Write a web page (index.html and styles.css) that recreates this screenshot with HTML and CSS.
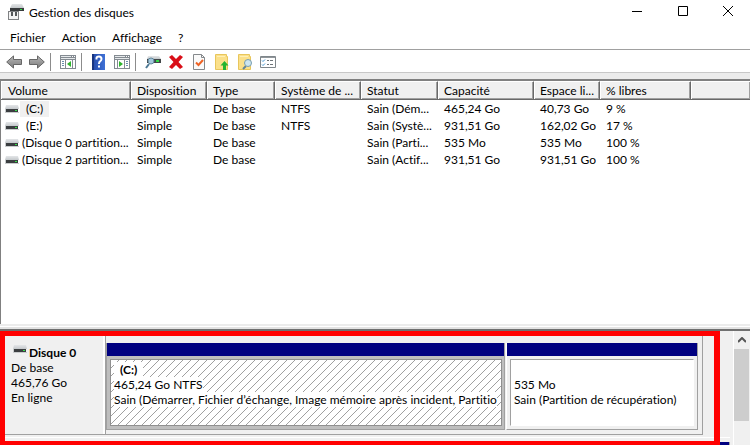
FILE: index.html
```html
<!DOCTYPE html>
<html lang="fr">
<head>
<meta charset="utf-8">
<title>Gestion des disques</title>
<link rel="stylesheet" href="styles.css">
</head>
<body>
<svg class="defs" aria-hidden="true">
  <defs>
    <linearGradient id="metal" x1="0" y1="0" x2="0" y2="1"><stop offset="0" stop-color="#e4e6e8"/><stop offset="1" stop-color="#c4c8cb"/></linearGradient>
    <linearGradient id="arrow" x1="0" y1="0" x2="0" y2="1"><stop offset="0" stop-color="#b8b8b8"/><stop offset="1" stop-color="#7c7c7c"/></linearGradient>
    <linearGradient id="help" x1="0" y1="0" x2="1" y2="0"><stop offset="0" stop-color="#2349a8"/><stop offset="1" stop-color="#3f71d6"/></linearGradient>
    <symbol id="drive" viewBox="0 0 14 8">
      <path d="M1 0h12l1 4H0z" fill="url(#metal)"/>
      <path d="M1 4h12v3H1z" fill="#3b3e40"/>
      <path d="M0 4h1v3h13V4h0v4H0z" fill="#c9cccd"/>
      <path d="M10 5h2v1h-2z" fill="#36e04a"/>
    </symbol>
    <symbol id="pane" viewBox="0 0 16 14">
      <path d="M0 0h16v14H0z" fill="#848b92"/>
      <path d="M1 1h10v1H1zM1 3h14v1H1z" fill="#e6e9eb"/>
      <path d="M12 1h1v1h-1zM14 1h1v1h-1z" fill="#fff"/>
    </symbol>
    <symbol id="folder" viewBox="0 0 14 16">
      <path d="M.5.500h11v2h1v13H.5z" fill="#fbe08a" stroke="#e8c65c"/>
      <path d="M2 2h8v1H2z" fill="#fff0b5"/>
    </symbol>
  </defs>
</svg>
<main class="window">
  <header class="titlebar">
    <svg class="app-icon" width="16" height="16" viewBox="0 0 16 16" aria-hidden="true">
      <path d="M4 0h10l2 4H2z" fill="url(#metal)"/><path d="M2 4h14v3H2z" fill="#383b3d"/><path d="M12 5h2v1h-2z" fill="#35dd48"/>
      <path d="M0 7h11v9H0z" fill="#808284"/><path d="M1 8h9v7H1z" fill="#f4f4f4"/><path d="M3 8h2v4H3zM7 8h2v4H7z" fill="#55585a"/>
    </svg>
    <h1>Gestion des disques</h1>
    <div class="caption-buttons">
      <button type="button" aria-label="Réduire"><svg width="12" height="12" viewBox="0 0 12 12"><path d="M1 5.500h10" stroke="#000"/></svg></button>
      <button type="button" aria-label="Agrandir"><svg width="12" height="12" viewBox="0 0 12 12"><path d="M1.500.500h9v9h-9z" stroke="#000" fill="none"/></svg></button>
      <button type="button" aria-label="Fermer"><svg width="12" height="12" viewBox="0 0 12 12"><path d="M1 0l10 10M11 0L1 10" stroke="#000"/></svg></button>
    </div>
  </header>
  <nav class="menubar">
    <button type="button">Fichier</button>
    <button type="button">Action</button>
    <button type="button">Affichage</button>
    <button type="button">?</button>
  </nav>
  <div class="toolbar" role="toolbar">
    <button type="button" aria-label="Précédent"><svg width="16" height="14" viewBox="0 0 16 14"><path d="M.7 7L7.500.9v3.600h8v5h-8v3.600z" fill="url(#arrow)" stroke="#676767"/></svg></button>
    <button type="button" aria-label="Suivant"><svg width="16" height="14" viewBox="0 0 16 14"><path d="M15.300 7L8.500.9v3.600h-8v5h8v3.600z" fill="url(#arrow)" stroke="#676767"/></svg></button>
    <span class="separator"></span>
    <button type="button" aria-label="Arborescence"><svg width="16" height="14" viewBox="0 0 16 14"><use href="#pane"/><path d="M1 5h4v8H1zM6 5h6v8H6zM13 5h2v8h-2z" fill="#fff"/><path d="M2 6h2v1H2zM2 8h2v1H2zM2 10h2v1H2z" fill="#6b8fae"/><path d="M11 6v6L7 9z" fill="#2eb52e"/></svg></button>
    <span class="separator"></span>
    <button type="button" aria-label="Aide"><svg width="13" height="16" viewBox="0 0 13 16"><path d="M0 0h13v16H0z" fill="url(#help)"/><path d="M0 0h2v16H0z" fill="#183580"/><path d="M4.500 5.500V4q0-1.500 2.500-1.500T9.500 5Q9.500 6.500 8 7.500 7 8 7 10M7 11.500v2" fill="none" stroke="#fff" stroke-width="2"/></svg></button>
    <button type="button" aria-label="Volet d'actions"><svg width="16" height="14" viewBox="0 0 16 14"><use href="#pane"/><path d="M1 5h2v8H1zM4 5h6v8H4zM11 5h4v8h-4z" fill="#fff"/><path d="M12 6h2v1h-2zM12 8h2v1h-2zM12 10h2v1h-2z" fill="#6b8fae"/><path d="M5 6v6l4-3z" fill="#2eb52e"/></svg></button>
    <span class="separator"></span>
    <button type="button" aria-label="Analyser les disques"><svg width="16" height="14" viewBox="0 0 16 14"><path d="M3 1h11l2 3H2z" fill="url(#metal)"/><path d="M2 4h14v4H2z" fill="#414648"/><path d="M11 5h3v2h-3z" fill="#32d944"/><path d="M4 9L1 13" stroke="#4c7894" stroke-width="2"/><circle cx="6" cy="6" r="3" fill="#a4c8dc" stroke="#62879c"/></svg></button>
    <button type="button" aria-label="Supprimer"><svg width="14" height="14" viewBox="0 0 14 14"><path d="M3 0l4 4 4-4 3 2-4.500 5 4.500 5-3 2-4-4-4 4-3-2 4.500-5L0 2z" fill="#d90e17"/></svg></button>
    <button type="button" aria-label="Propriétés"><svg width="12" height="16" viewBox="0 0 12 16"><path d="M.5.500h8l3 3v12H.5z" fill="#fafafa" stroke="#85898c"/><path d="M8.500.500v3h3" fill="none" stroke="#85898c"/><path d="M3 8.500l2.500 2.500L10 6" fill="none" stroke="#ee6325" stroke-width="2"/></svg></button>
    <button type="button" aria-label="Dossier parent"><svg width="14" height="16" viewBox="0 0 14 16"><use href="#folder"/><path d="M9.500 7l4 4.500H11V16H8v-4.500H5.500z" fill="#25b431"/></svg></button>
    <button type="button" aria-label="Rechercher"><svg width="16" height="16" viewBox="0 0 16 16"><use href="#folder" x="1" width="14" height="16"/><path d="M9 12l-3 3" stroke="#62859a" stroke-width="2"/><circle cx="11" cy="9" r="3.500" fill="#cde5f0" stroke="#799dae"/></svg></button>
    <button type="button" aria-label="Options"><svg width="16" height="12" viewBox="0 0 16 12"><path d="M.5.500h15v11H.5z" fill="#fff" stroke="#7f868b"/><path d="M1 1h14v1H1z" fill="#90969a"/><path d="M2 4.500l1 1 2-2M2 8.500l1 1 2-2" fill="none" stroke="#3f93d0"/><path d="M7 4.500h2m1 0h3M7 8.500h2m1 0h3" stroke="#6c7378"/></svg></button>
  </div>

  <section class="volumes">
    <table>
      <colgroup><col class="c-volume"><col class="c-layout"><col class="c-type"><col class="c-fs"><col class="c-status"><col class="c-size"><col class="c-free"><col class="c-percent"><col></colgroup>
      <thead><tr><th>Volume</th><th>Disposition</th><th>Type</th><th>Système de ...</th><th>Statut</th><th>Capacité</th><th>Espace li...</th><th>% libres</th><th></th></tr></thead>
      <tbody>
        <tr><td><div class="volume"><svg class="drive"><use href="#drive"/></svg><span class="letter selected">(C:)</span></div></td><td>Simple</td><td>De base</td><td>NTFS</td><td>Sain (Dém...</td><td>465,24 Go</td><td>40,73 Go</td><td>9 %</td><td></td></tr>
        <tr><td><div class="volume"><svg class="drive"><use href="#drive"/></svg><span class="letter">(E:)</span></div></td><td>Simple</td><td>De base</td><td>NTFS</td><td>Sain (Systè...</td><td>931,51 Go</td><td>162,02 Go</td><td>17 %</td><td></td></tr>
        <tr><td><div class="volume"><svg class="drive"><use href="#drive"/></svg><span>(Disque 0 partition...</span></div></td><td>Simple</td><td>De base</td><td></td><td>Sain (Parti...</td><td>535 Mo</td><td>535 Mo</td><td>100 %</td><td></td></tr>
        <tr><td><div class="volume"><svg class="drive"><use href="#drive"/></svg><span>(Disque 2 partition...</span></div></td><td>Simple</td><td>De base</td><td></td><td>Sain (Actif...</td><td>931,51 Go</td><td>931,51 Go</td><td>100 %</td><td></td></tr>
      </tbody>
    </table>
  </section>
  <div class="splitter"></div>

  <section class="graph">
    <div class="disks">
      <article class="disk">
        <div class="disk-label">
          <h2><svg class="drive"><use href="#drive"/></svg>Disque 0</h2>
          <p>De base</p><p>465,76 Go</p><p>En ligne</p>
        </div>
        <div class="partitions">
          <div class="partition main active">
            <div class="stripe"></div>
            <div class="details"><p class="name"><b>(C:)</b></p><p><span>465,24 Go NTFS</span></p><p><span>Sain (Démarrer, Fichier d’échange, Image mémoire après incident, Partitio</span></p></div>
          </div>
          <div class="partition recovery">
            <div class="stripe"></div>
            <div class="details"><p class="name"></p><p>535 Mo</p><p>Sain (Partition de récupération)</p></div>
          </div>
        </div>
      </article>
      <div class="next-disk"><div class="next-label"></div><div class="stripe"></div></div>
      <div class="highlight"></div>
    </div>
    <div class="scrollbar">
      <button type="button" aria-label="Défiler vers le haut"><svg width="8" height="6" viewBox="0 0 8 6"><path d="M0 5l4-4 4 4" fill="none" stroke="#555" stroke-width="2"/></svg></button>
      <div class="thumb"></div>
    </div>
  </section>
</main>
</body>
</html>
```
FILE: styles.css
```css
* { box-sizing: border-box; }

body {
  margin: 0;
  background: #fff;
  color: #000;
  font: 12px/15px "Segoe UI", Lato, sans-serif;
  font-variant-ligatures: none;
}

h1, h2, p { margin: 0; font-size: inherit; font-weight: 400; }

button {
  padding: 0;
  border: 0;
  background: none;
  color: inherit;
  font: inherit;
  font-variant-ligatures: none;
}

svg { display: block; flex: none; }
.defs { position: absolute; width: 0; height: 0; }
.drive { width: 14px; height: 8px; }

.window {
  display: flex;
  flex-direction: column;
  height: 100vh;
  overflow: hidden;
}

.titlebar {
  display: flex;
  flex: none;
  align-items: center;
  height: 24px;
  padding-left: 8px;
}

.titlebar h1 { flex: 1; padding-left: 5px; }
.caption-buttons { display: flex; }
.caption-buttons button { display: grid; place-items: center; width: 46px; height: 24px; }
.caption-buttons button:last-child { width: 44px; }

.menubar {
  display: flex;
  flex: none;
  gap: 16px;
  height: 25px;
  padding: 2px 10px 0;
}

.toolbar {
  display: flex;
  flex: none;
  height: 24px;
  padding-left: 2px;
  border-top: 1px solid #a0a0a0;
  border-bottom: 1px solid #c8c8c8;
}

.toolbar button { display: grid; place-items: center; width: 23px; padding-top: 2px; }
.separator { width: 8px; padding: 3px 2px 0; }
.separator::before { content: ""; display: block; width: 1px; height: 18px; background: #8c8c8c; }

.volumes {
  display: flex;
  flex: 1;
  flex-direction: column;
  min-height: 0;
  border-top: 6px solid #ececec;
}

.volumes::before { content: ""; height: 2px; background: #808080; }
.volumes::after { content: ""; flex: 1; border-left: 1px solid #808080; }

table {
  width: 100%;
  flex: none;
  border-collapse: separate;
  border-spacing: 0;
  table-layout: fixed;
  border-left: 1px solid #808080;
}

.c-volume { width: 130px; }
.c-layout { width: 76px; }
.c-type { width: 68px; }
.c-fs { width: 86px; }
.c-status { width: 77px; }
.c-size { width: 96px; }
.c-free { width: 66px; }
.c-percent { width: 91px; }

th, td { padding: 0 0 0 6px; text-align: left; font-weight: 400; white-space: nowrap; }

th {
  height: 19px;
  border-top: 1px solid #fff;
  border-right: 1px solid #696969;
  border-bottom: 1px solid #696969;
  background: #f0f0f0;
  box-shadow: inset 1px 0 #fff, inset -1px -1px #a0a0a0;
}

th:last-child { border-right: 0; }
th:first-child { padding-left: 7px; }
td { height: 17px; }
td:first-child { padding-left: 4px; }
.volume { display: flex; align-items: center; gap: 3px; }
.letter { margin-left: -2px; padding: 0 6px 1px; }
.selected { background: #f0f0f0; }

.splitter {
  flex: none;
  height: 7px;
  border-top: 2px solid #ececec;
  border-bottom: 2px solid #707070;
  background: #e3e3e3;
  box-shadow: inset 0 1px #fff;
}

.graph { display: flex; flex: none; height: 114px; background: #f0f0f0; }

.disks {
  position: relative;
  flex: 1;
  min-width: 0;
  overflow: hidden;
  border-right: 1px solid #fff;
}

.disk {
  display: flex;
  height: 104px;
  margin: 0 30px 0 5px;
  border-right: 1px solid #a0a0a0;
  border-bottom: 1px solid #a0a0a0;
}

.disk-label { width: 98px; padding: 14px 6px 0; }
.disk-label h2 { display: flex; gap: 2px; padding-left: 2px; font-weight: 700; }

.partitions {
  display: flex;
  flex: 1;
  gap: 1px;
  min-width: 0;
  padding: 12px 4px 4px 0;
  border-left: 2px solid #fff;
  box-shadow: inset 1px 0 #a0a0a0;
}

.partition {
  display: flex;
  flex-direction: column;
  min-width: 0;
  border: 1px solid #a0a0a0;
  border-width: 0 1px 1px 2px;
}

.main { flex: 401; }
.recovery { flex: 192; border-left: 1px solid #fff; }
.stripe { flex: none; height: 13px; background: #000080; }

.details {
  flex: 1;
  margin: 3px;
  padding: 2px 3px;
  overflow: hidden;
  border: 1px solid #a0a0a0;
  border-right-color: #fff;
  border-bottom-color: #fff;
  background: #fff;
  white-space: nowrap;
}

.active { background: #bebebe; }
.active .details {
  margin-right: 2px;
  border-color: #909090;
  background: linear-gradient(135deg, #fff 47%, #a0a0a0 47% 53%, #fff 53%) 0 0 / 8px 8px;
}

.details p { height: 15px; }
.details span, .details b { display: inline-block; background: #fff; }
.name b { padding: 0 6px; }

.next-disk {
  display: flex;
  height: 13px;
  margin: 2px 3px 0 5px;
  padding-top: 4px;
  border-top: 1px solid #fff;
}

.next-label { width: 100px; }
.next-disk .stripe { flex: 1; border-right: 1px solid #a0a0a0; }

/* Frame laid over the first disk */
.highlight {
  position: absolute;
  inset: 0 13px 0 0;
  border: 5px solid #f00;
  border-right-width: 6px;
  border-bottom-width: 4px;
}

.scrollbar { width: 16px; padding-right: 1px; }
.scrollbar button { display: grid; place-items: center; width: 100%; height: 18px; }
.thumb { height: 72px; background: #cdcdcd; }
```
